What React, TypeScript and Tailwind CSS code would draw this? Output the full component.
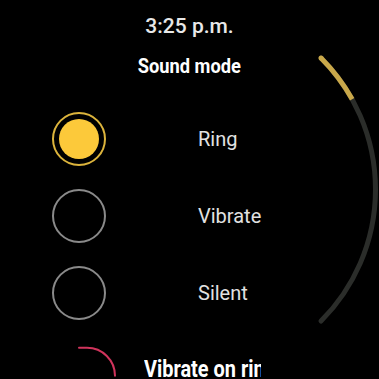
import React from "react";

const options = [
  { label: "Ring", selected: true },
  { label: "Vibrate", selected: false },
  { label: "Silent", selected: false },
];

function ScrollIndicator() {
  const cx = 189.5;
  const cy = 189.5;
  const r = 186;
  const pt = (deg: number) => {
    const a = (deg * Math.PI) / 180;
    return [cx + r * Math.cos(a), cy + r * Math.sin(a)];
  };
  const [gx1, gy1] = pt(-45);
  const [gx2, gy2] = pt(45);
  const [yx2, yy2] = pt(-29);
  return (
    <svg
      className="absolute inset-0 pointer-events-none"
      width={379}
      height={379}
      viewBox="0 0 379 379"
    >
      <path
        d={`M ${gx1} ${gy1} A ${r} ${r} 0 0 1 ${gx2} ${gy2}`}
        fill="none"
        stroke="#2b2d2a"
        strokeWidth={5}
        strokeLinecap="round"
      />
      <path
        d={`M ${gx1} ${gy1} A ${r} ${r} 0 0 1 ${yx2} ${yy2}`}
        fill="none"
        stroke="#c9a84a"
        strokeWidth={5}
        strokeLinecap="butt"
      />
      <circle cx={gx1} cy={gy1} r={2.5} fill="#c9a84a" />
    </svg>
  );
}

export default function App() {
  return (
    <div className="relative w-[379px] h-[379px] bg-black overflow-hidden font-[Roboto,sans-serif] select-none">
      <div className="flex flex-col">
        <div className="pt-[14px] flex justify-center">
          <span className="text-[21px] leading-[24px] font-medium text-[#e8e8e8]">
            3:25 p.m.
          </span>
        </div>
        <div className="mt-[16px] flex justify-center">
          <span className="inline-block text-[21px] leading-[24px] font-bold text-white scale-x-[0.87] whitespace-nowrap">
            Sound mode
          </span>
        </div>
        <div className="mt-[22px] flex flex-col">
          {options.map((o) => (
            <div key={o.label} className="h-[77px] flex items-center pl-[52px]">
              {o.selected ? (
                <div className="w-[54px] h-[54px] rounded-full border-2 border-[#dcb43c] flex items-center justify-center">
                  <div className="w-[40px] h-[40px] rounded-full bg-[#fcc93a]" />
                </div>
              ) : (
                <div className="w-[54px] h-[54px] rounded-full border-2 border-[#8a8a8a]" />
              )}
              <span className="ml-[92px] text-[20px] leading-[24px] text-[#e2e2e2]">
                {o.label}
              </span>
            </div>
          ))}
          <div className="h-[77px] flex items-center pl-[52px]">
            <svg
              width={54}
              height={77}
              viewBox="0 0 54 77"
              className="shrink-0 overflow-visible"
            >
              <path
                d="M 27 16.8 L 35 16.8 A 28 28 0 0 1 63 44.8"
                fill="none"
                stroke="#d0345c"
                strokeWidth={2}
                strokeLinecap="round"
              />
            </svg>
            <div className="ml-[38px] w-[117px] overflow-hidden">
              <span className="inline-block origin-left text-[24px] leading-[28px] font-bold text-white scale-x-[0.83] whitespace-nowrap">
                Vibrate on ring
              </span>
            </div>
          </div>
        </div>
      </div>
      <ScrollIndicator />
    </div>
  );
}
